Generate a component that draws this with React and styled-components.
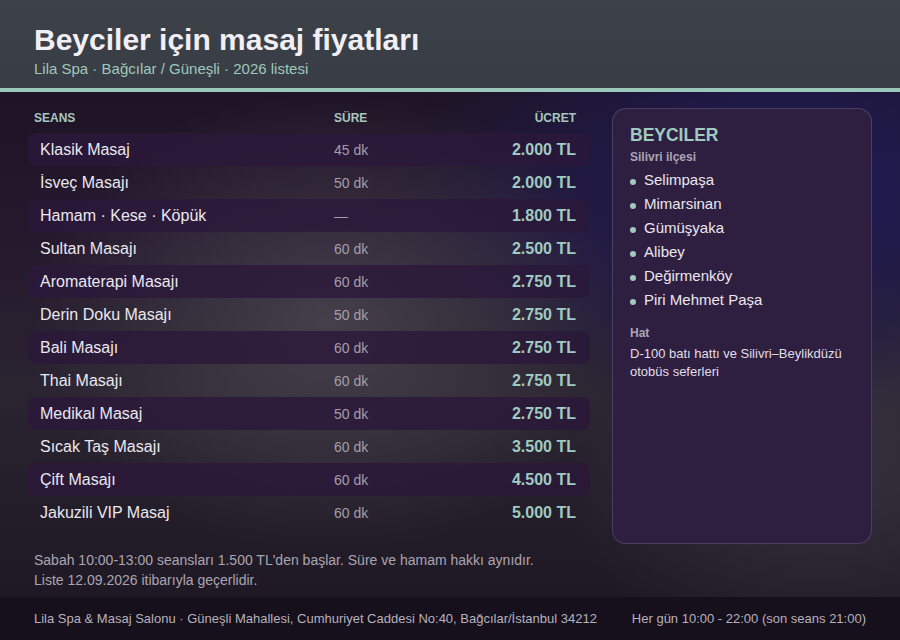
import React from "react";
import styled, { createGlobalStyle } from "styled-components";

const GlobalStyle = createGlobalStyle`
  html, body {
    margin: 0;
    padding: 0;
    background: #1a1320;
  }
  body {
    font-family: "Liberation Sans", Arial, sans-serif;
  }
`;

const services = [
  { name: "Klasik Masaj", time: "45 dk", price: "2.000 TL" },
  { name: "İsveç Masajı", time: "50 dk", price: "2.000 TL" },
  { name: "Hamam · Kese · Köpük", time: "—", price: "1.800 TL" },
  { name: "Sultan Masajı", time: "60 dk", price: "2.500 TL" },
  { name: "Aromaterapi Masajı", time: "60 dk", price: "2.750 TL" },
  { name: "Derin Doku Masajı", time: "50 dk", price: "2.750 TL" },
  { name: "Bali Masajı", time: "60 dk", price: "2.750 TL" },
  { name: "Thai Masajı", time: "60 dk", price: "2.750 TL" },
  { name: "Medikal Masaj", time: "50 dk", price: "2.750 TL" },
  { name: "Sıcak Taş Masajı", time: "60 dk", price: "3.500 TL" },
  { name: "Çift Masajı", time: "60 dk", price: "4.500 TL" },
  { name: "Jakuzili VIP Masaj", time: "60 dk", price: "5.000 TL" },
];

const areas = ["Selimpaşa", "Mimarsinan", "Gümüşyaka", "Alibey", "Değirmenköy", "Piri Mehmet Paşa"];

const App = () => {
  return (
    <Page>
      <GlobalStyle />
      <Header>
        <Title>Beyciler için masaj fiyatları</Title>
        <Subtitle>Lila Spa · Bağcılar / Güneşli · 2026 listesi</Subtitle>
      </Header>
      <Main>
        <PriceSection>
          <HeadRow>
            <HeadCell>SEANS</HeadCell>
            <HeadCell>SÜRE</HeadCell>
            <HeadCell align="right">ÜCRET</HeadCell>
          </HeadRow>
          {services.map((s, i) => (
            <Row key={s.name} striped={i % 2 === 0}>
              <Name>{s.name}</Name>
              <Duration>{s.time}</Duration>
              <Price>{s.price}</Price>
            </Row>
          ))}
          <Notes>
            Sabah 10:00-13:00 seansları 1.500 TL'den başlar. Süre ve hamam hakkı aynıdır.
            <br />
            Liste 12.09.2026 itibarıyla geçerlidir.
          </Notes>
        </PriceSection>
        <Card>
          <CardTitle>BEYCILER</CardTitle>
          <CardLabel>Silivri ilçesi</CardLabel>
          <AreaList>
            {areas.map((a) => (
              <AreaItem key={a}>{a}</AreaItem>
            ))}
          </AreaList>
          <CardLabel top="14px">Hat</CardLabel>
          <CardText>D-100 batı hattı ve Silivri–Beylikdüzü otobüs seferleri</CardText>
        </Card>
      </Main>
      <Footer>
        <span>Lila Spa &amp; Masaj Salonu · Güneşli Mahallesi, Cumhuriyet Caddesi No:40, Bağcılar/İstanbul 34212</span>
        <span>Her gün 10:00 - 22:00 (son seans 21:00)</span>
      </Footer>
    </Page>
  );
};

const Page = styled.div`
  width: 900px;
  height: 640px;
  display: flex;
  flex-direction: column;
  overflow: hidden;
  background:
    radial-gradient(ellipse 300px 230px at 330px 320px, rgba(92, 90, 96, 0.55), rgba(92, 90, 96, 0) 100%),
    radial-gradient(ellipse 380px 230px at 780px 190px, rgba(30, 28, 92, 0.95), rgba(30, 28, 92, 0) 100%),
    radial-gradient(ellipse 260px 200px at 820px 470px, rgba(70, 68, 78, 0.5), rgba(70, 68, 78, 0) 100%),
    linear-gradient(180deg, #1a1120 0%, #24182d 35%, #2a2430 62%, #1c1622 100%);
`;

const Header = styled.header`
  height: 92px;
  box-sizing: border-box;
  padding: 22px 34px 0;
  background: linear-gradient(180deg, #3d4249 0%, #383c44 100%);
  border-bottom: 4px solid #9cc8bc;
`;

const Title = styled.h1`
  margin: 0;
  font-size: 30px;
  line-height: 36px;
  font-weight: 700;
  color: #f1eef4;
`;

const Subtitle = styled.div`
  margin-top: 2px;
  font-size: 15px;
  line-height: 18px;
  color: #9fc8bd;
`;

const Main = styled.main`
  flex: 1;
  display: flex;
  gap: 22px;
  padding: 0 28px;
`;

const PriceSection = styled.section`
  width: 562px;
  padding-top: 19px;
  display: flex;
  flex-direction: column;
`;

const HeadRow = styled.div`
  display: grid;
  grid-template-columns: 300px 1fr auto;
  padding: 0 14px 0 6px;
  margin-bottom: 8px;
`;

const HeadCell = styled.div`
  font-size: 12px;
  line-height: 14px;
  font-weight: 700;
  color: #a7c6c0;
  text-align: ${(props) => props.align || "left"};
`;

const Row = styled.div`
  display: grid;
  grid-template-columns: 294px 1fr auto;
  align-items: center;
  height: 33px;
  padding: 0 14px 0 12px;
  border-radius: 8px;
  background: ${(props) => (props.striped ? "rgba(42, 24, 58, 0.8)" : "transparent")};
`;

const Name = styled.div`
  font-size: 16px;
  color: #ebe7ef;
`;

const Duration = styled.div`
  font-size: 14px;
  color: #a49eaa;
`;

const Price = styled.div`
  font-size: 16px;
  font-weight: 700;
  color: #9fcbc0;
  text-align: right;
`;

const Notes = styled.p`
  margin: 21px 0 0 6px;
  font-size: 14px;
  line-height: 20px;
  color: #aba5b1;
`;

const Card = styled.aside`
  margin-top: 16px;
  width: 260px;
  height: 436px;
  box-sizing: border-box;
  padding: 16px 17px;
  background: #2e1f40;
  border: 1px solid rgba(160, 140, 190, 0.28);
  border-radius: 14px;
`;

const CardTitle = styled.h2`
  margin: 0;
  font-size: 17.5px;
  line-height: 20px;
  font-weight: 700;
  color: #9fcbc0;
`;

const CardLabel = styled.div`
  margin-top: ${(props) => props.top || "5px"};
  font-size: 12px;
  line-height: 14px;
  font-weight: 700;
  color: #ada5b6;
`;

const AreaList = styled.ul`
  list-style: none;
  margin: 4px 0 0;
  padding: 0;
`;

const AreaItem = styled.li`
  display: flex;
  align-items: center;
  gap: 8px;
  font-size: 15px;
  line-height: 24px;
  color: #ebe7ef;
  &::before {
    content: "";
    width: 6px;
    height: 6px;
    margin-top: 3px;
    border-radius: 50%;
    background: #9fcbc0;
  }
`;

const CardText = styled.p`
  margin: 5px 0 0;
  font-size: 13px;
  line-height: 18px;
  color: #e2dee7;
`;

const Footer = styled.footer`
  height: 43px;
  flex-shrink: 0;
  display: flex;
  align-items: center;
  justify-content: space-between;
  padding: 0 34px;
  background: #160f1c;
  font-size: 13px;
  color: #b7b2bc;
`;

export default App;
